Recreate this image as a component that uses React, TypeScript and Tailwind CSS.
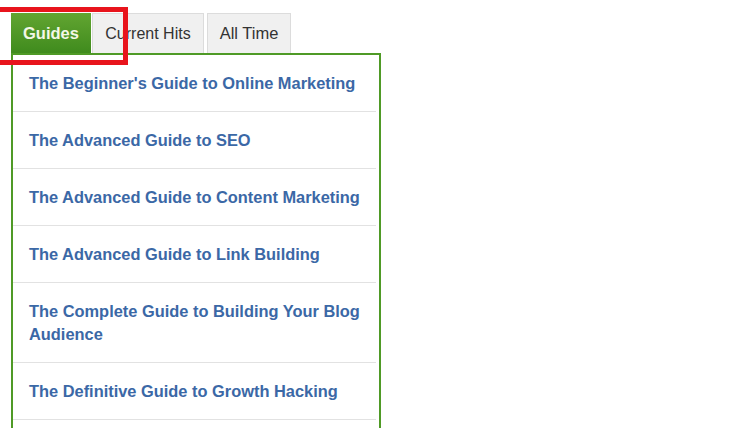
import React from 'react';

const guides = [
  "The Beginner's Guide to Online Marketing",
  'The Advanced Guide to SEO',
  'The Advanced Guide to Content Marketing',
  'The Advanced Guide to Link Building',
  'The Complete Guide to Building Your Blog Audience',
  'The Definitive Guide to Growth Hacking',
];

export default function App() {
  return (
    <div className="relative flex h-[428px] w-[750px] flex-col overflow-hidden bg-white pl-[11px] pt-[13px] font-['Liberation_Sans',Arial,sans-serif]">
      {/* Tabs */}
      <div className="flex h-[40px] shrink-0 items-stretch">
        <div className="flex w-[80px] items-center justify-center bg-gradient-to-b from-[#62a531] to-[#3f8b1d] text-[16.5px] font-bold text-[#f3f7e6]">
          Guides
        </div>
        <div className="ml-px flex w-[112px] items-center justify-center border border-b-0 border-[#dcdcdc] bg-[#f0f0f0] text-[16px] text-[#333]">
          Current Hits
        </div>
        <div className="ml-[3px] flex w-[84px] items-center justify-center border border-b-0 border-[#dcdcdc] bg-[#f0f0f0] text-[16.5px] text-[#333]">
          All Time
        </div>
      </div>

      {/* Panel */}
      <div className="w-[370px] flex-1 border-2 border-b-0 border-[#4f9a26] pr-[3px]">
        <ul>
          {guides.map((g) => (
            <li
              key={g}
              className="border-b border-[#e2e2e2] pb-[16px] pl-[16px] pr-px pt-[17px] text-[16.4px] font-bold leading-[23px] text-[#3b68a6]"
            >
              {g}
            </li>
          ))}
        </ul>
      </div>

      {/* Red annotation box */}
      <div className="absolute left-[-6px] top-[7px] h-[58px] w-[134px] border-[5px] border-[#e8141c]" />
    </div>
  );
}
